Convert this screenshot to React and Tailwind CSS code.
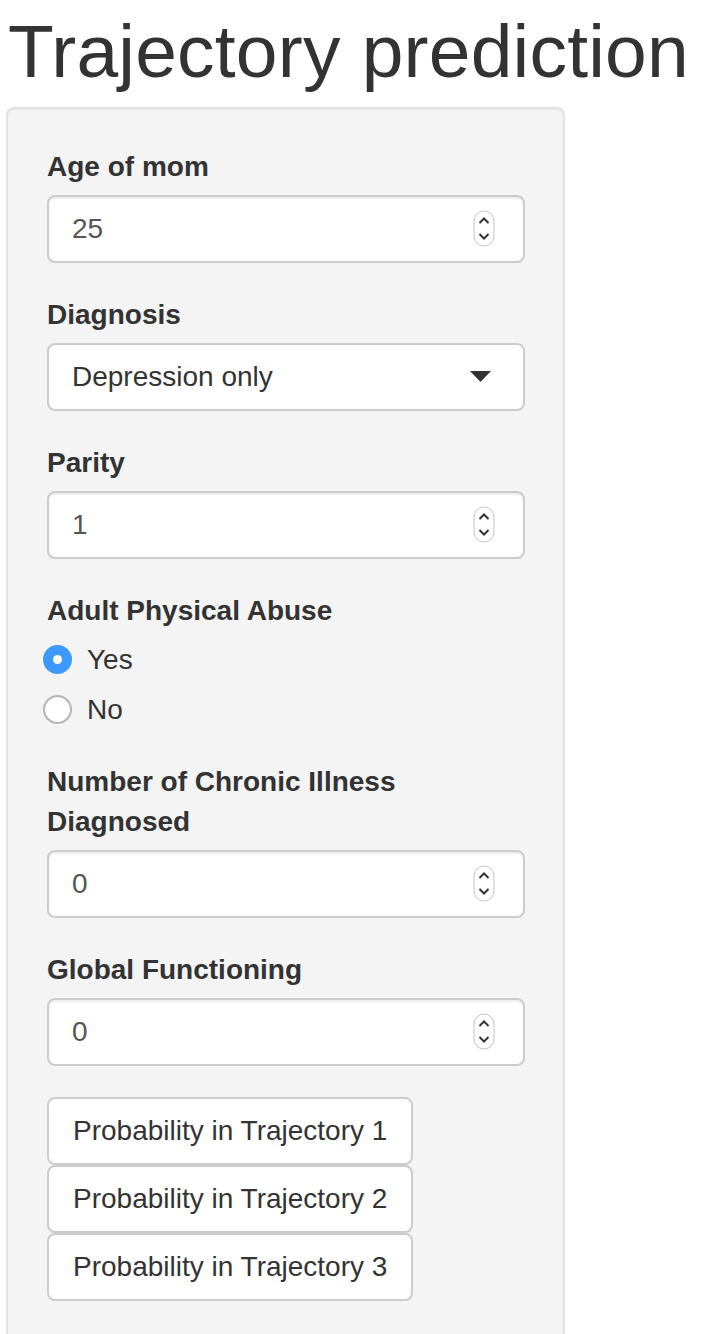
import React from "react";

const font = { fontFamily: '"Liberation Sans", Arial, Helvetica, sans-serif' };

function Spinner() {
  return (
    <svg width="22" height="37" viewBox="0 0 22 37" className="shrink-0">
      <rect x="1" y="1" width="20" height="35" rx="10" fill="#fff" stroke="#c4c4c4" strokeWidth="1" />
      <path d="M6.5 13 L11 8.5 L15.5 13" fill="none" stroke="#333" strokeWidth="2" />
      <path d="M6.5 24 L11 28.5 L15.5 24" fill="none" stroke="#333" strokeWidth="2" />
    </svg>
  );
}

function Label({ children }) {
  return (
    <div className="text-[28px] font-bold leading-[40px] text-[#333] pt-[2px] mb-[8px]">{children}</div>
  );
}

function NumberInput({ value }) {
  return (
    <div className="flex items-center justify-between w-[478px] h-[68px] bg-white border-2 border-[#cccccc] rounded-[8px] pl-[23px] pr-[28px] text-[28px] text-[#555] shadow-[inset_0_2px_2px_rgba(0,0,0,0.075)]">
      <span>{value}</span>
      <Spinner />
    </div>
  );
}

function Radio({ checked, label }) {
  return (
    <div className="flex items-center h-[40px] -ml-[4px]">
      {checked ? (
        <div className="w-[29px] h-[29px] rounded-full bg-[#3d99fb] flex items-center justify-center">
          <div className="w-[9px] h-[9px] rounded-full bg-white" />
        </div>
      ) : (
        <div className="w-[29px] h-[29px] rounded-full bg-white border-2 border-[#b5b5b5] shadow-[inset_0_1px_1px_rgba(0,0,0,0.05)]" />
      )}
      <span className="ml-[15px] text-[28px] text-[#333]">{label}</span>
    </div>
  );
}

function Btn({ children }) {
  return (
    <div className="flex items-center w-[366px] h-[68px] bg-white border-2 border-[#cccccc] rounded-[8px] pl-[24px] text-[28px] text-[#333]">
      {children}
    </div>
  );
}

export default function App() {
  return (
    <div className="min-h-screen bg-white overflow-hidden" style={font}>
      <h1 className="pt-[10px] pl-[8px] mb-[14px] text-[75px] leading-[1.1] font-normal text-[#333] tracking-[0.2px] whitespace-nowrap">
        Trajectory prediction
      </h1>
      <div className="ml-[6px] w-[559px] bg-[#f4f4f4] border-2 border-[#e3e3e3] rounded-[8px] pl-[39px] pt-[36px] pb-[38px] shadow-[inset_0_1px_1px_rgba(0,0,0,0.05)]">
        <div className="mb-[30px]">
          <Label>Age of mom</Label>
          <NumberInput value="25" />
        </div>
        <div className="mb-[30px]">
          <Label>Diagnosis</Label>
          <div className="flex items-center justify-between w-[478px] h-[68px] bg-white border-2 border-[#cccccc] rounded-[8px] pl-[23px] pr-[32px] text-[28px] text-[#333]">
            <span>Depression only</span>
            <svg width="21" height="11" viewBox="0 0 21 11">
              <path d="M0 0 L21 0 L10.5 11 Z" fill="#333" />
            </svg>
          </div>
        </div>
        <div className="mb-[30px]">
          <Label>Parity</Label>
          <NumberInput value="1" />
        </div>
        <div className="mb-[30px]">
          <div className="text-[28px] font-bold leading-[40px] text-[#333] pt-[2px]">Adult Physical Abuse</div>
          <div className="mt-[9px] flex flex-col gap-[10px]">
            <Radio checked label="Yes" />
            <Radio label="No" />
          </div>
        </div>
        <div className="mb-[30px]">
          <Label>
            Number of Chronic Illness
            <br />
            Diagnosed
          </Label>
          <NumberInput value="0" />
        </div>
        <div className="mb-[31px]">
          <Label>Global Functioning</Label>
          <NumberInput value="0" />
        </div>
        <div className="flex flex-col">
          <Btn>Probability in Trajectory 1</Btn>
          <Btn>Probability in Trajectory 2</Btn>
          <Btn>Probability in Trajectory 3</Btn>
        </div>
      </div>
    </div>
  );
}
